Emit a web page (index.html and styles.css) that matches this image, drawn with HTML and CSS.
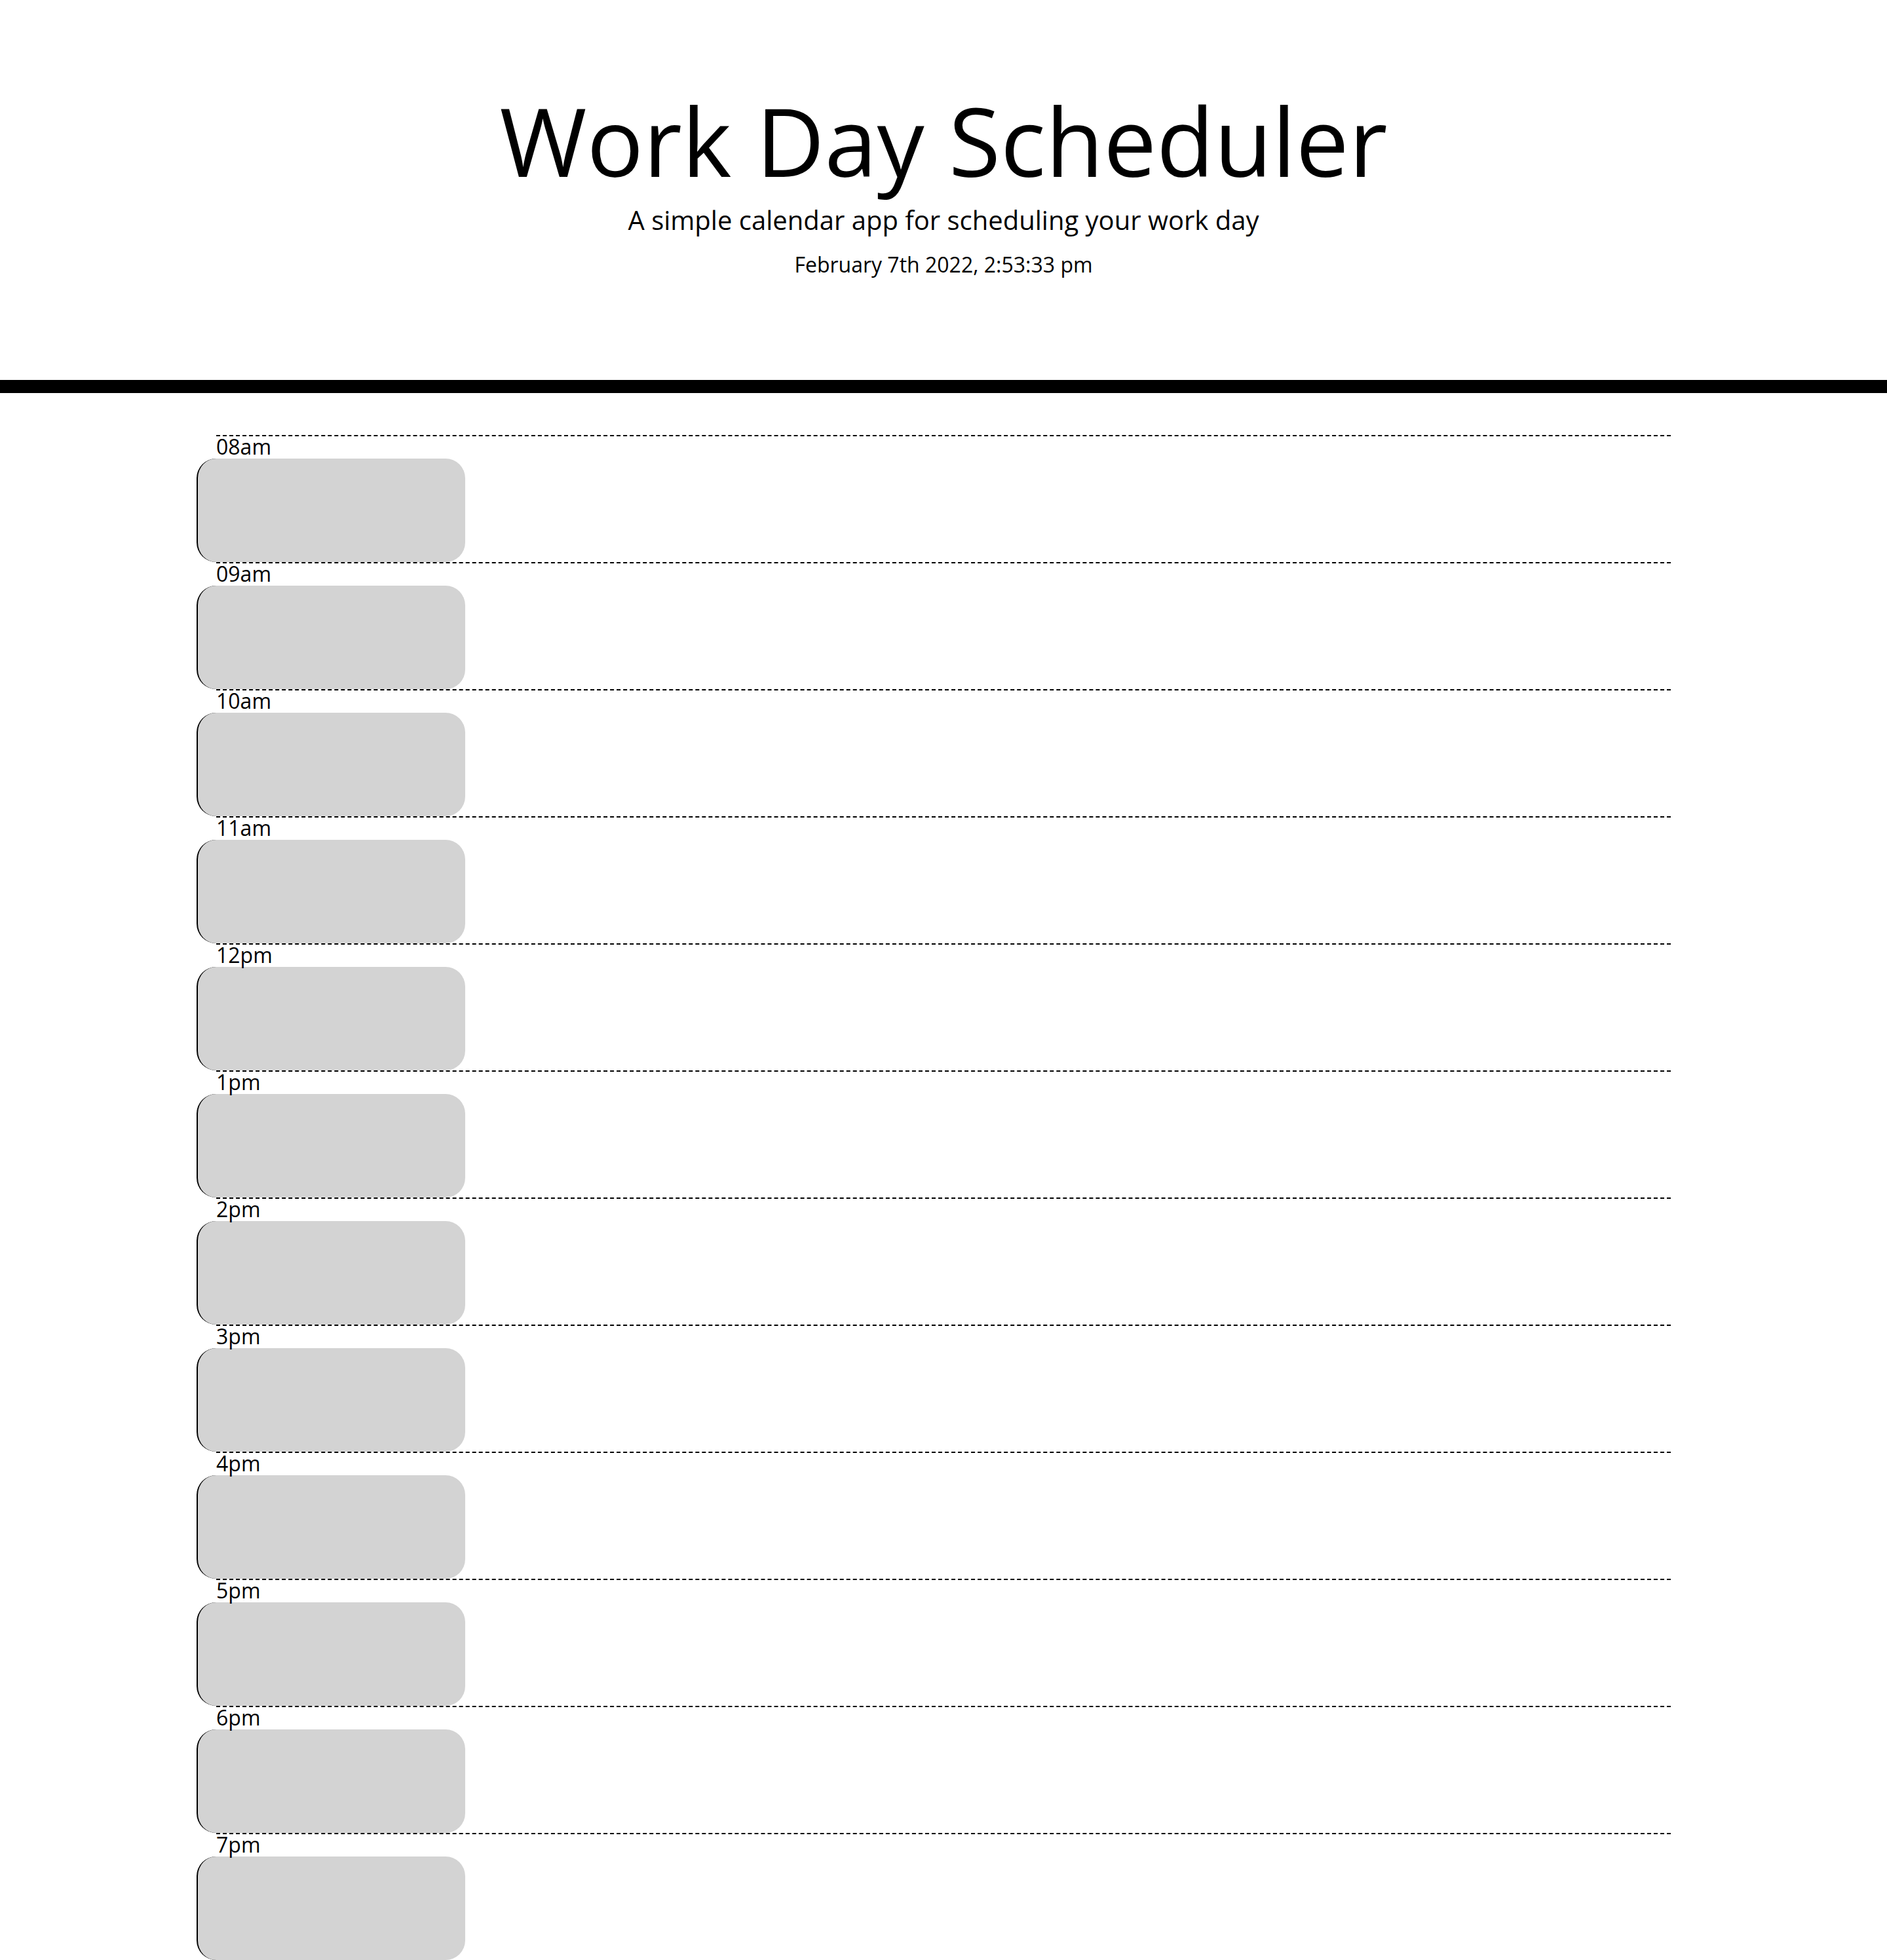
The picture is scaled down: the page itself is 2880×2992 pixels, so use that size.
FILE: index.html
```html
<!DOCTYPE html>
<html lang="en">
<head>
<meta charset="utf-8">
<title>Work Day Scheduler</title>
<link rel="stylesheet" href="styles.css">
</head>
<body>
<header class="jumbotron">
  <h1 class="title">Work Day Scheduler</h1>
  <p class="lead">A simple calendar app for scheduling your work day</p>
  <p class="current-day">February 7th 2022, 2:53:33 pm</p>
</header>
<main class="container">
  <section class="time-block"><div class="hour">08am</div><textarea class="description past"></textarea></section>
  <section class="time-block"><div class="hour">09am</div><textarea class="description past"></textarea></section>
  <section class="time-block"><div class="hour">10am</div><textarea class="description past"></textarea></section>
  <section class="time-block"><div class="hour">11am</div><textarea class="description past"></textarea></section>
  <section class="time-block"><div class="hour">12pm</div><textarea class="description past"></textarea></section>
  <section class="time-block"><div class="hour">1pm</div><textarea class="description past"></textarea></section>
  <section class="time-block"><div class="hour">2pm</div><textarea class="description past"></textarea></section>
  <section class="time-block"><div class="hour">3pm</div><textarea class="description past"></textarea></section>
  <section class="time-block"><div class="hour">4pm</div><textarea class="description past"></textarea></section>
  <section class="time-block"><div class="hour">5pm</div><textarea class="description past"></textarea></section>
  <section class="time-block"><div class="hour">6pm</div><textarea class="description past"></textarea></section>
  <section class="time-block"><div class="hour">7pm</div><textarea class="description past"></textarea></section>
</main>
</body>
</html>
```
FILE: styles.css
```css
* {
  box-sizing: border-box;
}

html, body {
  margin: 0;
  padding: 0;
  background: #ffffff;
}

body {
  font-family: "Open Sans", "Noto Sans", "Liberation Sans", sans-serif;
  font-size: 32px;
  line-height: 1;
  color: #000000;
}

.jumbotron {
  text-align: center;
  padding: 128px 64px;
  border-bottom: 20px solid #000000;
  margin: 0 0 64px 0;
}

.title {
  font-size: 144px;
  font-weight: 400;
  line-height: 172px;
  margin: 0 0 16px 0;
}

.lead {
  font-size: 40px;
  line-height: 40px;
  margin: 0 0 32px 0;
}

.current-day {
  font-size: 32px;
  line-height: 32px;
  margin: 0 0 32px 0;
}

.container {
  width: 2220px;
  margin: 0 auto;
}

.time-block {
  border-top: 2px dashed #000000;
}

.hour {
  font-size: 32px;
  line-height: 32px;
  margin-bottom: 2px;
}

.description {
  display: block;
  width: 410px;
  height: 158px;
  margin: 0 0 0 -30px;
  padding: 20px;
  border: none;
  border-left: 2px solid #000000;
  border-radius: 30px;
  resize: none;
  font-family: inherit;
  font-size: 32px;
  outline: none;
}

.past {
  background-color: #d3d3d3;
  color: #ffffff;
}
```
